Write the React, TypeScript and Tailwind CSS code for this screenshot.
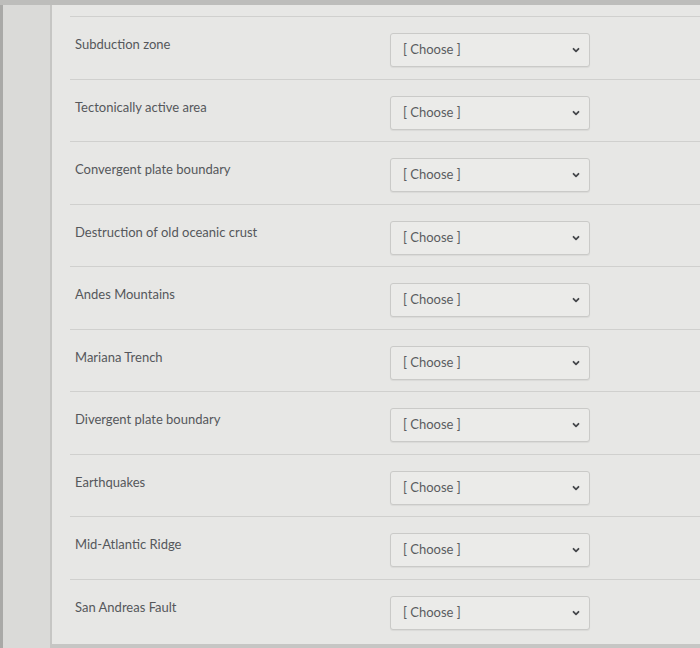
const rows = [
  "Subduction zone",
  "Tectonically active area",
  "Convergent plate boundary",
  "Destruction of old oceanic crust",
  "Andes Mountains",
  "Mariana Trench",
  "Divergent plate boundary",
  "Earthquakes",
  "Mid-Atlantic Ridge",
  "San Andreas Fault",
];

function ChooseSelect() {
  return (
    <div className="flex h-[34px] w-[200px] items-center justify-between rounded-[3px] border border-[#cacac8] bg-[#ebebe9] pl-[12px] pr-[8px] shadow-[0_1px_1px_rgba(0,0,0,0.06)]">
      <span className="text-[13px] text-[#5a5c60]">[ Choose ]</span>
      <svg width="10" height="10" viewBox="0 0 10 10" className="text-[#45474b]">
        <path d="M2.5 3.8 L5 6.3 L7.5 3.8" fill="none" stroke="currentColor" strokeWidth="1.8" strokeLinecap="round" strokeLinejoin="round" />
      </svg>
    </div>
  );
}

export default function App() {
  return (
    <div
      className="flex h-[648px] w-[700px] flex-col overflow-hidden bg-[#dcdcda]"
      style={{ fontFamily: "Lato, 'Open Sans', sans-serif" }}
    >
      <div className="h-[5px] shrink-0 bg-[#bdbdbb]" />
      <div className="flex flex-1">
        <div className="w-[50px] shrink-0 border-l-[3px] border-[#a9a9a7] bg-[#dadad8]" />
        <div className="flex flex-1 flex-col border-b-[4px] border-l-2 border-[#c6c6c4] bg-[#e7e7e5] pl-[18px] pt-[11px]">
          {rows.map((label) => (
            <div
              key={label}
              className="flex h-[62.5px] shrink-0 items-start border-t border-[#d0d0ce]"
            >
              <div className="w-[320px] pl-[5px] pt-[18px] text-[13px] text-[#55575b]">
                {label}
              </div>
              <div className="pt-[16px]">
                <ChooseSelect />
              </div>
            </div>
          ))}
        </div>
      </div>
    </div>
  );
}
